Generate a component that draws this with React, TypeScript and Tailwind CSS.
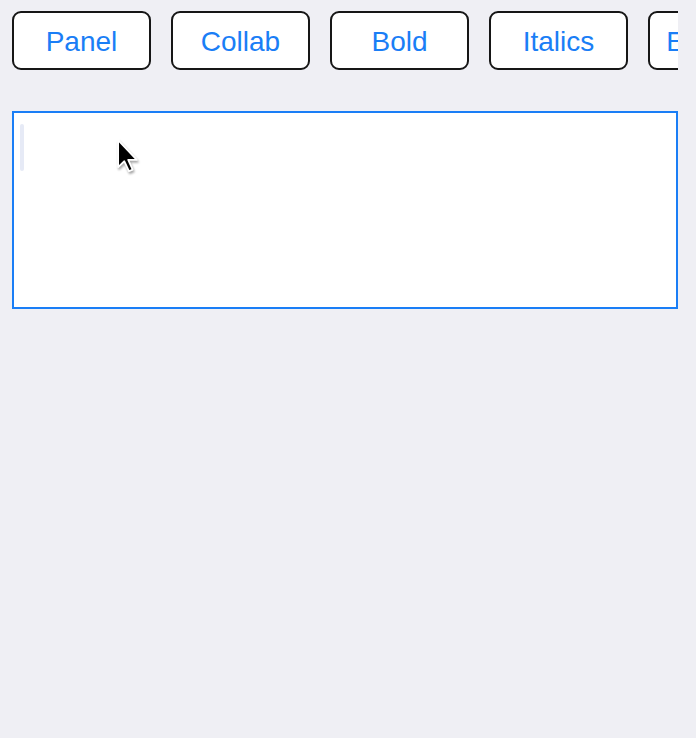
const labels = ['Panel', 'Collab', 'Bold', 'Italics', 'Embeds'];

function Cursor() {
  return (
    <svg
      width="25"
      height="36"
      viewBox="0 0 18 26"
      className="absolute left-[116px] top-[138px] drop-shadow-[1px_2px_1px_rgba(0,0,0,0.35)]"
    >
      <path
        d="M1.5 1.5 L1.5 21 L6 16.8 L9.3 24 L12 22.8 L8.8 15.8 L15 15.8 Z"
        fill="#000"
        stroke="#fff"
        strokeWidth="1.3"
        strokeLinejoin="round"
      />
    </svg>
  );
}

export default function App() {
  return (
    <div className="relative min-h-[738px] w-[696px] bg-[#efeff4] font-['Liberation_Sans',Arial,sans-serif]">
      <div className="pl-3 pt-[11px]">
        <div className="flex w-[666px] gap-5 overflow-hidden">
          {labels.map(label => (
            <button
              key={label}
              className="flex h-[59px] w-[139px] shrink-0 items-center justify-center rounded-[9px] border-2 border-[#161616] bg-white pt-[2px] text-[28px] text-[#1a7ef6]"
            >
              {label}
            </button>
          ))}
        </div>

        <div className="mt-[41px] h-[198px] w-[666px] border-2 border-[#1a7ef6] bg-white pl-[6px] pt-[11px]">
          <div className="h-[47px] w-[4px] rounded-full bg-[#e6eaf6]" />
        </div>
      </div>
      <Cursor />
    </div>
  );
}
